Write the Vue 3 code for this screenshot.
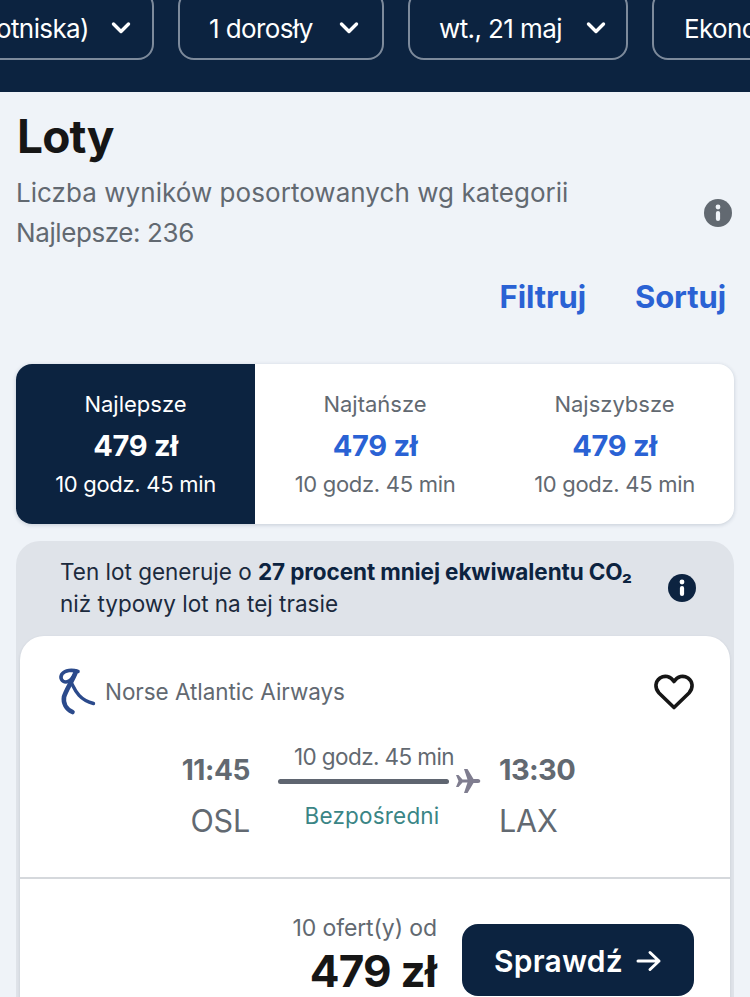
<script setup>
const tabs = [
  { label: 'Najlepsze', price: '479 zł', time: '10 godz. 45 min', active: true },
  { label: 'Najtańsze', price: '479 zł', time: '10 godz. 45 min', active: false },
  { label: 'Najszybsze', price: '479 zł', time: '10 godz. 45 min', active: false }
]
const chips = [
  { label: 'otniska)', cls: 'c1' },
  { label: '1 dorosły', cls: 'c2' },
  { label: 'wt., 21 maj', cls: 'c3' },
  { label: 'Ekonomiczna', cls: 'c4' }
]
</script>

<template>
  <div class="page">
    <header class="top">
      <div class="chips">
        <div v-for="c in chips" :key="c.label" class="chip" :class="c.cls">
          <span>{{ c.label }}</span>
          <svg class="chev" width="20" height="14" viewBox="0 0 20 14"><path d="M2.5 3 L10 10.5 L17.5 3" fill="none" stroke="#fff" stroke-width="3.4" stroke-linecap="round" stroke-linejoin="round"/></svg>
        </div>
      </div>
    </header>

    <main class="content">
      <h1 class="title">Loty</h1>
      <div class="summary">
        <p>Liczba wyników posortowanych wg kategorii<br><span class="best">Najlepsze: 236</span></p>
        <svg class="info" width="28" height="28" viewBox="0 0 28 28"><circle cx="14" cy="14" r="14" fill="#626971"/><circle cx="14" cy="8" r="2.4" fill="#eff3f8"/><rect x="11.9" y="12" width="4.2" height="10" rx="2.1" fill="#eff3f8"/></svg>
      </div>
      <div class="actions">
        <span>Filtruj</span>
        <span>Sortuj</span>
      </div>

      <div class="tabs">
        <div v-for="t in tabs" :key="t.label" class="tab" :class="{ active: t.active }">
          <div class="tab-label">{{ t.label }}</div>
          <div class="tab-price">{{ t.price }}</div>
          <div class="tab-time">{{ t.time }}</div>
        </div>
      </div>

      <section class="result">
        <div class="eco">
          <p>Ten lot generuje o <b>27 procent mniej ekwiwalentu CO₂</b><br>niż typowy lot na tej trasie</p>
          <svg class="eco-info" width="28" height="28" viewBox="0 0 28 28"><circle cx="14" cy="14" r="14" fill="#0c2340"/><circle cx="14" cy="8" r="2.4" fill="#fff"/><rect x="11.9" y="12" width="4.2" height="10" rx="2.1" fill="#fff"/></svg>
        </div>
        <div class="card">
          <div class="airline">
            <div class="brand">
              <svg width="40" height="48" viewBox="0 0 40 48"><path d="M21 3.5 C15 1.5 8 2 5 6 C2.5 10 5 14 9 14 C14 14 17 8 19 3.5" fill="none" stroke="#2b4a8b" stroke-width="3.6" stroke-linecap="round" stroke-linejoin="round"/><path d="M19 3.5 C16 12 9 22 7 29 C6 35 9 41 15.5 44" fill="none" stroke="#2b4a8b" stroke-width="4.6" stroke-linecap="round"/><path d="M15 16 C18 22 22 32 36.5 35.5" fill="none" stroke="#2b4a8b" stroke-width="3.4" stroke-linecap="round"/></svg>
              <span>Norse Atlantic Airways</span>
            </div>
            <svg class="heart" width="42" height="38" viewBox="0 0 42 38"><path d="M21 34.5 L6 20 C1.5 15 2 8.5 7 5 C11.5 2 17.5 3 21 8.5 C24.5 3 30.5 2 35 5 C40 8.5 40.5 15 36 20 Z" fill="none" stroke="#161616" stroke-width="3.6" stroke-linejoin="round"/></svg>
          </div>

          <div class="route">
            <div class="stop dep">
              <div class="time">11:45</div>
              <div class="code">OSL</div>
            </div>
            <div class="middle">
              <div class="dur">10 godz. 45 min</div>
              <div class="line-row">
                <div class="line"></div>
                <svg width="26" height="26" viewBox="0 0 26 26"><path d="M1 7 L3.5 7 L7.5 11.5 L12.5 11.5 L9 1 L12.5 1 L18.5 11 L23 11 C26 11 26 15 23 15 L18.5 15 L12.5 25 L9 25 L12.5 14.5 L7.5 14.5 L3.5 19 L1 19 L3.5 13 Z" fill="#7f7d8f"/></svg>
              </div>
              <div class="direct">Bezpośredni</div>
            </div>
            <div class="stop arr">
              <div class="time">13:30</div>
              <div class="code">LAX</div>
            </div>
          </div>

          <div class="bottom">
            <div class="price-box">
              <div class="offers">10 ofert(y) od</div>
              <div class="price">479 zł</div>
            </div>
            <button class="cta">
              <span>Sprawdź</span>
              <svg width="26" height="24" viewBox="0 0 26 24"><path d="M2 12 H23 M14 3.5 L23 12 L14 20.5" fill="none" stroke="#fff" stroke-width="3" stroke-linecap="round" stroke-linejoin="round"/></svg>
            </button>
          </div>
        </div>
      </section>
    </main>
  </div>
</template>

<style>
html, body { margin: 0; background: #eff3f8; }
</style>

<style scoped>
.page {
  width: 750px;
  height: 997px;
  overflow: hidden;
  background: #eff3f8;
  font-family: Inter, "Noto Sans", sans-serif;
  color: #161616;
}
p { margin: 0; }

.top {
  height: 92px;
  background: #0c2340;
  overflow: hidden;
}
.chips {
  display: flex;
  gap: 24px;
  margin-top: -10px;
  margin-left: -60px;
  width: 1100px;
}
.chip {
  flex: none;
  box-sizing: border-box;
  height: 70px;
  padding-top: 6px;
  border: 2px solid #7d8a9b;
  border-radius: 16px;
  display: flex;
  align-items: center;
  color: #fff;
  font-size: 26px;
  letter-spacing: -0.6px;
  justify-content: space-between;
}
.chev { flex: none; }
.c1 { width: 214px; padding-right: 21px; justify-content: flex-end; gap: 22px; }
.c2 { width: 206px; padding-left: 29px; padding-right: 23px; }
.c3 { width: 220px; padding-left: 29px; padding-right: 20px; }
.c4 { width: 260px; padding-left: 30px; padding-right: 20px; }

.content { padding: 0 16px; }
.title {
  margin: 17px 0 0;
  font-size: 46px;
  line-height: 54px;
  font-weight: 700;
  letter-spacing: -0.8px;
  padding-left: 1px;
}
.summary {
  margin-top: 10px;
  display: flex;
  align-items: center;
  justify-content: space-between;
  padding-right: 2px;
  color: #626971;
  font-size: 26px;
  line-height: 40px;
  letter-spacing: 0.05px;
}
.best { letter-spacing: -0.4px; }
.actions {
  margin-top: 26px;
  display: flex;
  justify-content: flex-end;
  gap: 49px;
  padding-right: 8px;
  color: #2a62d4;
  font-size: 31px;
  line-height: 36px;
  font-weight: 700;
  letter-spacing: -0.1px;
}
.tabs {
  margin-top: 49px;
  width: 718px;
  height: 160px;
  display: grid;
  grid-template-columns: 239px 240px 239px;
  background: #fff;
  border-radius: 16px;
  overflow: hidden;
  box-shadow: 0 1px 4px rgba(12, 35, 64, .18);
}
.tab {
  display: flex;
  flex-direction: column;
  align-items: center;
  color: #626971;
  padding-top: 25px;
}
.tab-label { font-size: 22px; line-height: 30px; letter-spacing: 0; }
.tab-time { font-size: 22px; line-height: 30px; letter-spacing: -0.3px; }
.tab-price {
  font-size: 29px;
  line-height: 36px;
  margin: 9px 0 5px;
  font-weight: 700;
  color: #2a62d4;
  letter-spacing: -0.3px;
}
.tab.active { background: #0c2340; color: #fff; }
.tab.active .tab-price { color: #fff; }

.result {
  margin-top: 17px;
  width: 718px;
  background: #dfe3e9;
  border-radius: 24px 24px 0 0;
  padding: 0 4px;
  box-sizing: border-box;
}
.eco {
  height: 95px;
  box-sizing: border-box;
  padding: 15px 34px 0 40px;
  display: flex;
  justify-content: space-between;
  align-items: flex-start;
  font-size: 22.5px;
  line-height: 32px;
  letter-spacing: 0;
  color: #1b2a3d;
}
.eco b { font-weight: 700; color: #0c2340; letter-spacing: -0.1px; }
.eco-info { margin-top: 18px; }
.card {
  background: #fff;
  border-radius: 24px 24px 0 0;
  height: 400px;
  box-sizing: border-box;
  box-shadow: 0 1px 3px rgba(12, 35, 64, .12);
}
.airline {
  display: flex;
  justify-content: space-between;
  align-items: center;
  padding: 32px 35px 0 37px;
  height: 48px;
}
.brand {
  display: flex;
  align-items: center;
  gap: 8px;
  font-size: 22.5px;
  line-height: 26px;
  letter-spacing: -0.05px;
  color: #626971;
}
.brand span { margin-top: -1px; }
.route {
  display: flex;
  margin-top: 26px;
  height: 135px;
  padding-left: 162px;
  box-sizing: border-box;
}
.stop { display: flex; flex-direction: column; color: #626971; }
.dep { width: 68px; align-items: flex-end; }
.arr { width: 80px; align-items: flex-start; }
.time {
  font-size: 28px;
  line-height: 36px;
  font-weight: 700;
  letter-spacing: -0.4px;
  margin-top: 10px;
}
.arr .time { font-size: 29px; letter-spacing: -0.6px; }
.code { font-size: 30.5px; line-height: 40px; margin-top: 13px; letter-spacing: -0.2px; }
.middle {
  width: 202px;
  margin: 0 19px 0 28px;
  display: flex;
  flex-direction: column;
  align-items: flex-start;
  color: #626971;
}
.dur {
  width: 192px;
  text-align: center;
  white-space: nowrap;
  font-size: 22.5px;
  line-height: 30px;
  letter-spacing: -0.6px;
}
.line-row { display: flex; align-items: center; height: 26px; margin-top: -4px; }
.line { width: 171px; height: 5px; border-radius: 3px; background: #5f6570; margin-right: 6px; flex: none; }
.direct {
  width: 188px;
  text-align: center;
  color: #3a8585;
  font-size: 22.5px;
  line-height: 30px;
  letter-spacing: 0.2px;
  margin-top: 7px;
}
.bottom {
  border-top: 2px solid #d5d8dc;
  padding: 45px 36px 0 0;
  display: flex;
  justify-content: flex-end;
  align-items: flex-start;
  gap: 25px;
}
.price-box { display: flex; flex-direction: column; align-items: flex-end; margin-top: -11px; }
.offers { color: #626971; font-size: 23px; line-height: 30px; letter-spacing: -0.1px; }
.price { font-size: 44px; line-height: 56px; font-weight: 700; letter-spacing: -0.8px; color: #161616; margin-right: 1px; }
.cta {
  width: 232px;
  height: 72px;
  background: #0c2340;
  color: #fff;
  border: 0;
  border-radius: 16px;
  display: flex;
  align-items: center;
  justify-content: center;
  gap: 13px;
  font-family: inherit;
  font-size: 30px;
  font-weight: 600;
  letter-spacing: 0.2px;
  padding: 2px 0 0;
}
</style>
